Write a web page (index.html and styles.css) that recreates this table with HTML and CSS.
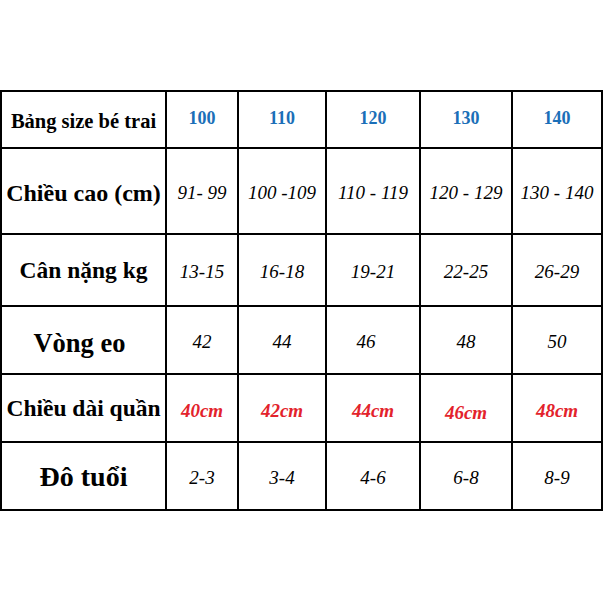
FILE: index.html
```html
<!DOCTYPE html>
<html lang="vi">
<head>
<meta charset="utf-8">
<title>Bảng size bé trai</title>
<link rel="stylesheet" href="styles.css">
</head>
<body>
<div class="size-table">
  <div class="cell label label-title">Bảng size bé trai</div>
  <div class="cell size">100</div>
  <div class="cell size">110</div>
  <div class="cell size">120</div>
  <div class="cell size">130</div>
  <div class="cell size">140</div>

  <div class="cell label label-height">Chiều cao (cm)</div>
  <div class="cell val">91- 99</div>
  <div class="cell val">100 -109</div>
  <div class="cell val">110 - 119</div>
  <div class="cell val">120 - 129</div>
  <div class="cell val">130 - 140</div>

  <div class="cell label label-weight">Cân nặng kg</div>
  <div class="cell val">13-15</div>
  <div class="cell val">16-18</div>
  <div class="cell val">19-21</div>
  <div class="cell val">22-25</div>
  <div class="cell val">26-29</div>

  <div class="cell label label-waist">Vòng eo</div>
  <div class="cell val">42</div>
  <div class="cell val">44</div>
  <div class="cell val shift-left">46</div>
  <div class="cell val">48</div>
  <div class="cell val">50</div>

  <div class="cell label label-length">Chiều dài quần</div>
  <div class="cell val red">40cm</div>
  <div class="cell val red">42cm</div>
  <div class="cell val red">44cm</div>
  <div class="cell val red low">46cm</div>
  <div class="cell val red">48cm</div>

  <div class="cell label label-age">Đô tuổi</div>
  <div class="cell val">2-3</div>
  <div class="cell val">3-4</div>
  <div class="cell val">4-6</div>
  <div class="cell val">6-8</div>
  <div class="cell val">8-9</div>
</div>
</body>
</html>
```

FILE: styles.css
```css
html, body {
  margin: 0;
  padding: 0;
  background: #ffffff;
}

body {
  padding-top: 90px;
  color: #000;
}

.size-table {
  display: grid;
  width: max-content;
  grid-template-columns: 163px 70px 86px 92px 90px 88px;
  grid-template-rows: 55px 84px 70px 66px 66px 66px;
  gap: 2px;
  padding: 2px;
  background: #000;
  font-family: "Times New Roman", "Liberation Serif", Tinos, "DejaVu Serif", serif;
}

.cell {
  background: #fff;
  display: flex;
  align-items: center;
  justify-content: center;
  white-space: nowrap;
  line-height: 1;
  font-family: "Times New Roman", "Liberation Serif", Tinos, "DejaVu Serif", serif;
}

.label {
  font-weight: bold;
}

.label-title {
  font-size: 20.5px;
  padding-top: 4px;
}

.label-height {
  font-size: 24px;
  padding-top: 4px;
}

.label-weight {
  font-size: 23.5px;
  padding-top: 2px;
}

.label-waist {
  font-size: 26.5px;
  padding-top: 6px;
  padding-right: 8px;
}

.label-length {
  font-size: 23.5px;
  padding-top: 2px;
}

.label-age {
  font-size: 28px;
  padding-top: 2px;
}

.size {
  font-weight: bold;
  font-size: 18px;
  color: #1b6fb8;
  padding-bottom: 3px;
}

.val {
  font-style: italic;
  font-size: 19px;
  padding-top: 2px;
}

.red {
  font-weight: bold;
  color: #e3232c;
  padding-top: 4px;
}

.red.low {
  padding-top: 8px;
}

.shift-left {
  padding-right: 14px;
}
```
